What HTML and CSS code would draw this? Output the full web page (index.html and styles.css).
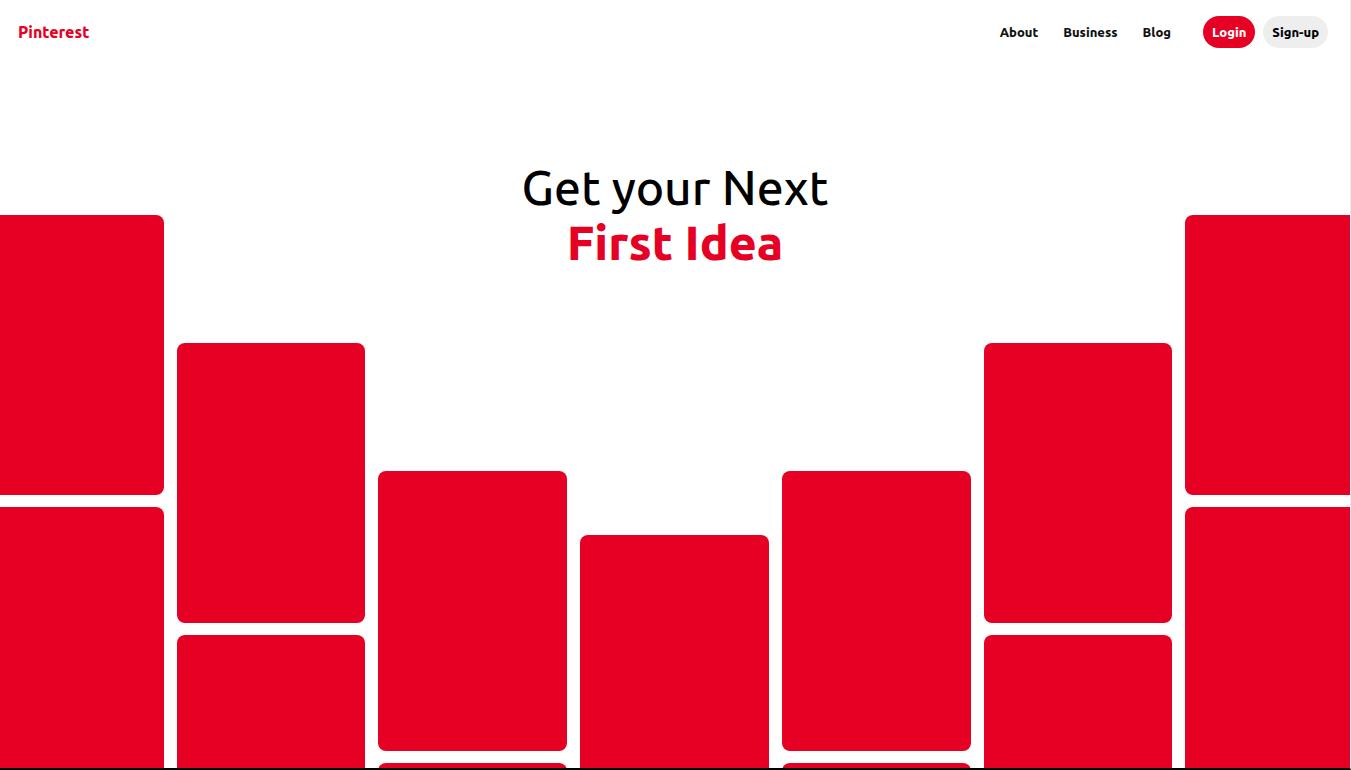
FILE: index.html
```html
<!DOCTYPE html>
<html lang="en">
<head>
<meta charset="utf-8">
<title>Pinterest</title>
<link rel="stylesheet" href="styles.css">
</head>
<body>
<div class="page">
  <header class="header">
    <a class="brand" href="#">Pinterest</a>
    <nav class="nav">
      <a href="#">About</a>
      <a href="#">Business</a>
      <a href="#">Blog</a>
    </nav>
    <div class="actions">
      <button class="button button-primary" type="button">Login</button>
      <button class="button" type="button">Sign-up</button>
    </div>
  </header>
  <main class="hero">
    <h1 class="title">Get your Next <strong>First Idea</strong></h1>
    <div class="columns">
      <div class="column high"><div class="card"></div><div class="card"></div></div>
      <div class="column upper"><div class="card"></div><div class="card"></div></div>
      <div class="column lower"><div class="card"></div><div class="card"></div></div>
      <div class="column low"><div class="card"></div><div class="card"></div></div>
      <div class="column lower"><div class="card"></div><div class="card"></div></div>
      <div class="column upper"><div class="card"></div><div class="card"></div></div>
      <div class="column high"><div class="card"></div><div class="card"></div></div>
    </div>
  </main>
</div>
</body>
</html>
```
FILE: styles.css
```css
* { box-sizing: border-box; }

body {
  margin: 0;
  font-family: Ubuntu, "Noto Sans", sans-serif;
  color: #000;
  background: #fff;
}

.page {
  display: flex;
  flex-direction: column;
  height: 100vh;
  overflow: hidden;
  border-right: 1px solid #eee;
  border-bottom: 2px solid #000;
}

.header {
  display: flex;
  flex: none;
  align-items: center;
  height: 64px;
  padding: 0 22px 0 18px;
}

.brand {
  margin-right: auto;
  color: #e60023;
  font-size: 16px;
  font-weight: 800;
  text-decoration: none;
}

.nav {
  display: flex;
  gap: 25px;
  margin-right: 32px;
  font-size: 13px;
  font-weight: 800;
}

.nav a {
  color: #111;
  text-decoration: none;
}

.actions {
  display: flex;
  gap: 8px;
}

.button {
  height: 32px;
  padding: 0 9px;
  border: 0;
  border-radius: 16px;
  background: #eee;
  color: #000;
  font: inherit;
  font-size: 13px;
  font-weight: 800;
}

.button-primary {
  background: #e60023;
  color: #fff;
}

.hero {
  display: grid;
  flex: 1;
  min-height: 0;
  overflow: hidden;
}

.title {
  grid-area: 1 / 1;
  z-index: 1;
  justify-self: center;
  margin: 96px 0 0;
  font-size: 48px;
  line-height: 55px;
  font-weight: 500;
  text-align: center;
}

.title strong {
  display: block;
  color: #e60023;
  font-weight: 800;
}

.columns {
  display: grid;
  grid-area: 1 / 1;
  grid-template-columns: repeat(7, 1fr);
  gap: 13px;
  margin: 0 -24px 0 -25px;
}

.column {
  display: flex;
  flex-direction: column;
  gap: 12px;
}

.high { padding-top: 151px; }
.upper { padding-top: 279px; }
.lower { padding-top: 407px; }
.low { padding-top: 471px; }

.card {
  flex: none;
  height: 280px;
  border-radius: 8px;
  background: #e60023;
}
```
